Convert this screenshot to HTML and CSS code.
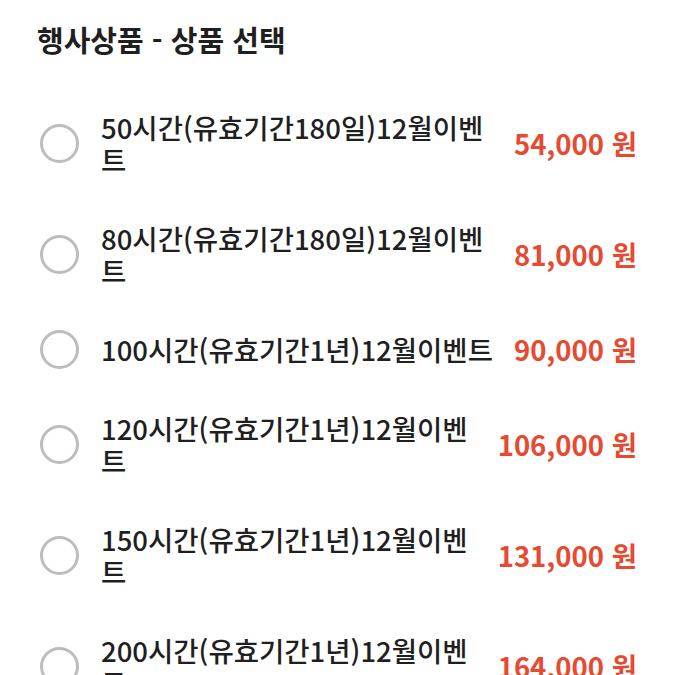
FILE: index.html
```html
<!DOCTYPE html>
<html lang="ko">
<head>
<meta charset="utf-8">
<link rel="stylesheet" href="styles.css">
</head>
<body>
<div class="page">
  <h1 class="title">행사상품 - 상품 선택</h1>
  <ul class="list">
    <li class="item"><span class="radio"></span><span class="name">50시간(유효기간180일)12월이벤트</span><span class="price">54,000 원</span></li>
    <li class="item"><span class="radio"></span><span class="name">80시간(유효기간180일)12월이벤트</span><span class="price">81,000 원</span></li>
    <li class="item"><span class="radio"></span><span class="name">100시간(유효기간1년)12월이벤트</span><span class="price">90,000 원</span></li>
    <li class="item"><span class="radio"></span><span class="name">120시간(유효기간1년)12월이벤트</span><span class="price">106,000 원</span></li>
    <li class="item"><span class="radio"></span><span class="name">150시간(유효기간1년)12월이벤트</span><span class="price">131,000 원</span></li>
    <li class="item"><span class="radio"></span><span class="name">200시간(유효기간1년)12월이벤트</span><span class="price">164,000 원</span></li>
  </ul>
</div>
</body>
</html>
```
FILE: styles.css
```css
* { box-sizing: border-box; }
html, body { margin: 0; padding: 0; background: #fff; }
body {
  font-family: "Noto Sans CJK KR", "Noto Sans", sans-serif;
  color: #1f1f1f;
  overflow: hidden;
}
.page {
  padding: 20px 38px 0 37px;
}
.title {
  margin: 0;
  font-size: 29px;
  font-weight: 700;
  line-height: 38px;
  color: #1f1f1f;
}
.list {
  list-style: none;
  margin: 30px 0 0 0;
  padding: 0;
}
.item {
  display: flex;
  align-items: center;
  padding: 23px 0 24px 3px;
}
.radio {
  flex: none;
  width: 39px;
  height: 39px;
  margin: -4px 22px -4px 0;
  border: 3px solid #bdbdbd;
  border-radius: 50%;
}
.name {
  flex: 1;
  min-width: 0;
  font-size: 27.5px;
  line-height: 32px;
  font-weight: 500;
  color: #1f1f1f;
}
.price {
  flex: none;
  margin-left: 14px;
  font-size: 27.5px;
  line-height: 32px;
  font-weight: 600;
  color: #e64a32;
}
```
